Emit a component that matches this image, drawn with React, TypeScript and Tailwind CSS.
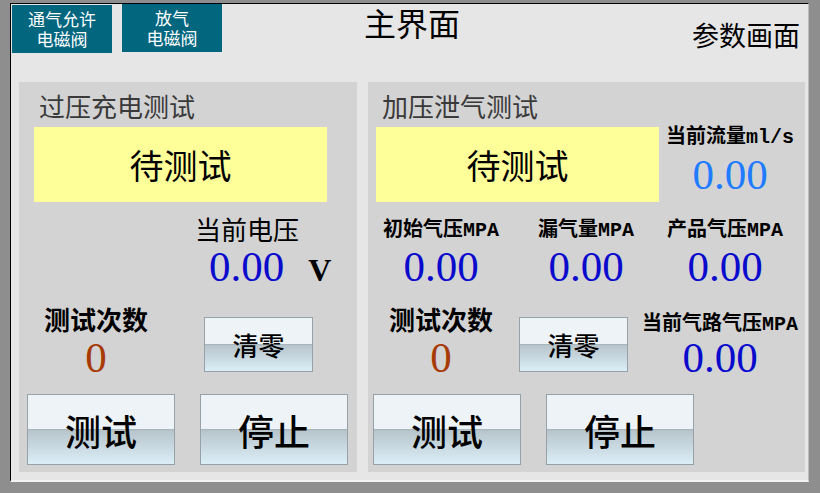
import React from 'react'

const SERIF = "font-['Liberation_Serif','Noto_Sans_CJK_SC',serif]"
const CJK = "font-['Noto_Sans_CJK_SC',sans-serif]"
const MONO = "font-['Liberation_Mono','Noto_Sans_CJK_SC',monospace]"

const btnFace =
  'bg-[linear-gradient(to_bottom,#eef3f7_0%,#eef3f7_50%,#a9b6bd_50%,#b8c5cc_52%,#dbeef7_100%)] border border-[#96a2a8]'

function ValveButton({ lines, className }: { lines: string[]; className?: string }) {
  return (
    <button
      className={`w-[100px] h-[48px] bg-[#02667f] text-white text-[17px] leading-[20px] flex flex-col items-center justify-center ${CJK} ${className ?? ''}`}
    >
      {lines.map((l) => (
        <span key={l}>{l}</span>
      ))}
    </button>
  )
}

function Reading({ value, color = 'text-[#0a0acc]', className }: { value: string; color?: string; className?: string }) {
  return <div className={`${SERIF} text-[43px] leading-none ${color} ${className ?? ''}`}>{value}</div>
}

function Label({ text, className }: { text: string; className?: string }) {
  return <div className={`${MONO} text-[20px] leading-[20px] font-bold text-black whitespace-nowrap ${className ?? ''}`}>{text}</div>
}

function Counter({ className }: { className?: string }) {
  return (
    <div className={`w-[130px] flex flex-col items-center ${className ?? ''}`}>
      <div className={`${CJK} text-[26px] leading-none font-bold text-black`}>测试次数</div>
      <div className={`${SERIF} text-[43px] leading-none text-[#a83a06] mt-[4px]`}>0</div>
    </div>
  )
}

function ClearButton({ className }: { className?: string }) {
  return (
    <button className={`w-[109px] h-[55px] ${btnFace} ${CJK} text-[26px] font-medium text-black flex items-center justify-center ${className ?? ''}`}>
      清零
    </button>
  )
}

function BigButton({ text, className }: { text: string; className?: string }) {
  return (
    <button className={`w-[148px] h-[71px] ${btnFace} ${CJK} text-[36px] font-medium text-black flex items-center justify-center ${className ?? ''}`}>
      {text}
    </button>
  )
}

function Status({ className }: { className?: string }) {
  return (
    <div className={`h-[75px] bg-[#ffff99] flex items-center justify-center ${CJK} text-[34px] text-black ${className ?? ''}`}>
      待测试
    </div>
  )
}

export default function App() {
  return (
    <div className="w-[820px] h-[493px] bg-[#8e8e8e] pt-[3px] pl-[10px] overflow-hidden">
      <div className="w-[799px] h-[479px] bg-[#e6e6e6] border-l border-t border-black border-b-2 border-b-[#f2f2f2] border-r border-r-[#bdbdbd] flex flex-col">
        {/* header */}
        <div className="h-[78px] flex items-start">
          <ValveButton lines={['通气允许', '电磁阀']} className="ml-px mt-px" />
          <ValveButton lines={['放气', '电磁阀']} className="ml-[10px]" />
          <div className={`${CJK} text-[32px] leading-none text-black ml-[142px] mt-[2px]`}>主界面</div>
          <div className={`${CJK} text-[27px] leading-none text-black ml-auto mr-[8px] mt-[17px]`}>参数画面</div>
        </div>

        <div className="flex gap-[11px] ml-[8px]">
          {/* 过压充电测试 */}
          <div className="w-[338px] h-[390px] bg-[#d3d3d3] flex flex-col">
            <div className={`${CJK} text-[26px] leading-none text-[#3a3a3a] ml-[20px] mt-[11px]`}>过压充电测试</div>
            <Status className="w-[293px] ml-[15px] mt-[8px]" />
            <div className={`${CJK} text-[26px] leading-none text-black ml-[176px] mt-[14px]`}>当前电压</div>
            <div className="flex items-baseline ml-[190px] mt-[3px]">
              <Reading value="0.00" />
              <span className={`${SERIF} text-[32px] leading-none font-bold text-black ml-[24px]`}>V</span>
            </div>
            <div className="flex items-start mt-[18px] h-[73px]">
              <Counter className="ml-[12px]" />
              <ClearButton className="ml-[43px] mt-[11px]" />
            </div>
            <div className="flex mt-[15px]">
              <BigButton text="测试" className="ml-[8px]" />
              <BigButton text="停止" className="ml-[25px]" />
            </div>
          </div>

          {/* 加压泄气测试 */}
          <div className="w-[437px] h-[390px] bg-[#d3d3d3] flex flex-col">
            <div className={`${CJK} text-[26px] leading-none text-[#3a3a3a] ml-[14px] mt-[11px]`}>加压泄气测试</div>
            <div className="flex items-start mt-[8px] h-[75px]">
              <Status className="w-[283px] ml-[8px]" />
              <div className="w-[126px] ml-[8px] flex flex-col items-center">
                <Label text="当前流量ml/s" className="mt-[1px]" />
                <Reading value="0.00" color="text-[#1f7bff]" className="mt-[5px]" />
              </div>
            </div>
            <div className="flex items-start mt-[19px] h-[67px]">
              <div className="w-[130px] ml-[8px] flex flex-col items-center">
                <Label text="初始气压MPA" />
                <Reading value="0.00" className="mt-[4px]" />
              </div>
              <div className="w-[130px] ml-[15px] flex flex-col items-center">
                <Label text="漏气量MPA" />
                <Reading value="0.00" className="mt-[4px]" />
              </div>
              <div className="w-[130px] ml-[9px] flex flex-col items-center">
                <Label text="产品气压MPA" />
                <Reading value="0.00" className="mt-[4px]" />
              </div>
            </div>
            <div className="flex items-start mt-[18px] h-[73px]">
              <Counter className="ml-[8px]" />
              <ClearButton className="ml-[13px] mt-[11px]" />
              <div className="w-[170px] ml-[7px] mt-[9px] flex flex-col items-center">
                <Label text="当前气路气压MPA" />
                <Reading value="0.00" className="mt-px" />
              </div>
            </div>
            <div className="flex mt-[15px]">
              <BigButton text="测试" className="ml-[5px]" />
              <BigButton text="停止" className="ml-[25px]" />
            </div>
          </div>
        </div>
      </div>
    </div>
  )
}
